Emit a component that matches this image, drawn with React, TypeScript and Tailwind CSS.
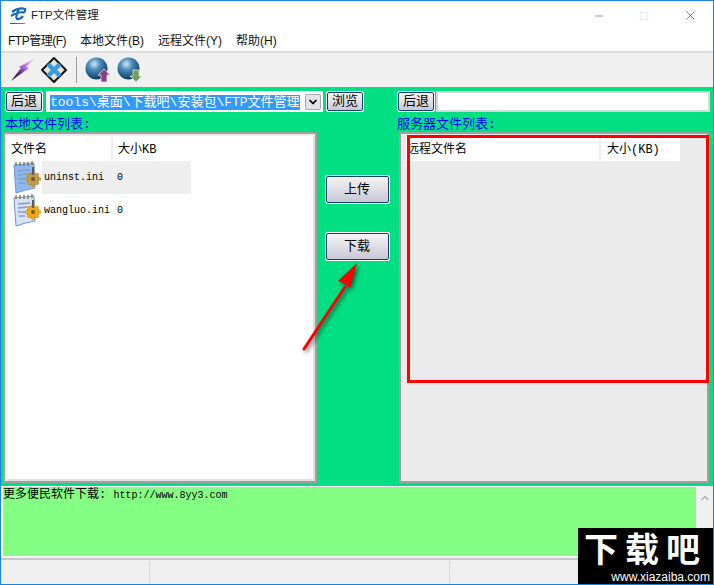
import { ChevronDown, ChevronUp, Minus, Square, X } from "lucide-react";

const uiFont = "font-['Liberation_Sans','Noto_Sans_CJK_SC',sans-serif]";
const monoFont = "font-['Liberation_Mono','Noto_Sans_CJK_SC',monospace]";

const menus = ["FTP管理(F)", "本地文件(B)", "远程文件(Y)", "帮助(H)"];

const SmallButton = ({ label }: { label: string }) => (
  <button className="h-[21px] w-[38px] shrink-0 rounded-[2px] border border-white bg-white p-0 outline-none">
    <span className={`flex h-full w-full items-center justify-center rounded-[2px] border border-[#123f6e] bg-gradient-to-b from-[#f6f6f6] to-[#c9c9d6] text-[13px] text-black ${monoFont}`}>
      {label}
    </span>
  </button>
);

const BigButton = ({ label }: { label: string }) => (
  <button className="h-[29px] w-[65px] shrink-0 rounded-[2px] border border-white bg-white p-0">
    <span className={`flex h-full w-full items-center justify-center rounded-[2px] border border-[#123f6e] bg-gradient-to-b from-[#f4f4f4] to-[#c8c8d6] text-[13px] text-black ${monoFont}`}>
      {label}
    </span>
  </button>
);

const BoltIcon = () => (
  <svg width="28" height="28" viewBox="0 0 28 28">
    <defs>
      <linearGradient id="bolt" x1="0" y1="1" x2="1" y2="0">
        <stop offset="0" stopColor="#111" />
        <stop offset="0.35" stopColor="#5a2a86" />
        <stop offset="0.6" stopColor="#b66be0" />
        <stop offset="1" stopColor="#f3eaf6" />
      </linearGradient>
    </defs>
    <path d="M2 25 L12 12 L10 11 L26 2 L17 11 L20 12 Z" fill="url(#bolt)" />
  </svg>
);

const DiamondIcon = () => (
  <svg width="28" height="28" viewBox="0 0 28 28">
    <path d="M14 2 L26 14 L14 26 L2 14 Z" fill="#e8e4d4" stroke="#111" strokeWidth="2" strokeLinejoin="round" />
    <path d="M8 8 L20 20 M20 8 L8 20" stroke="#3a9be0" strokeWidth="4.5" />
  </svg>
);

const GlobeIcon = ({ down }: { down?: boolean }) => (
  <svg width="26" height="26" viewBox="0 0 26 26">
    <defs>
      <radialGradient id={down ? "globeD" : "globeU"} cx="0.4" cy="0.3" r="0.75">
        <stop offset="0" stopColor="#d4e8f4" />
        <stop offset="0.35" stopColor="#4f8fbd" />
        <stop offset="0.8" stopColor="#174f7c" />
        <stop offset="1" stopColor="#0d2f4c" />
      </radialGradient>
    </defs>
    <circle cx="11.5" cy="11.5" r="11" fill={`url(#${down ? "globeD" : "globeU"})`} />
    {down ? (
      <path d="M16 13 H22 V19 H25 L19 25 L13 19 H16 Z" fill="#6f9d5c" stroke="#e8efe2" strokeWidth="0.8" />
    ) : (
      <path d="M19 12 L25 18 H22 V25 H16 V18 H13 Z" fill="#8b3f84" stroke="#eee0ec" strokeWidth="0.8" />
    )}
  </svg>
);

// notebook with a gear; the first row's gear is duller than the second's
const IniIcon = ({ tinted }: { tinted?: boolean }) => {
  const gear = tinted ? "#c49a48" : "#f0a818";
  return (
    <svg width="31" height="33" viewBox="0 0 31 33" className="shrink-0">
      <path d="M3 4 L23 2 L24 27 Q13 29 5 32 Z" fill={tinted ? "#8fb8ec" : "#d6e2f8"} stroke="#6f94d0" strokeWidth="1" />
      <path d="M7 10 L19 9 M7 14 L17 13 M7 18 L14 18 M8 22 L14 22" stroke="#7f9ccc" strokeWidth="1.4" />
      <path d="M5 1 V5 M9 1 V5 M13 1 V5 M17 1 V5 M21 0 V4" stroke="#6e6e50" strokeWidth="1.2" />
      <circle cx="22" cy="18" r="6" fill={gear} stroke="#8a6420" strokeWidth="0.8" />
      <path d="M22 10 V26 M14 18 H30 M16.5 12.5 L27.5 23.5 M27.5 12.5 L16.5 23.5" stroke={gear} strokeWidth="3" />
      <circle cx="22" cy="18" r="2" fill="#6a5630" />
      <path d="M22 6 V14" stroke="#5a5a5a" strokeWidth="2" />
    </svg>
  );
};

const LocalRow = ({ name, tinted }: { name: string; tinted?: boolean }) => (
  <div className="flex h-[33px] w-[180px] items-center">
    <IniIcon tinted={tinted} />
    <div className={`flex h-full flex-1 items-center pl-[2px] text-[10px] text-black ${monoFont} ${tinted ? "bg-[#eeeeee]" : ""}`}>
      <span className="w-[73px] shrink-0 whitespace-nowrap">{name}</span>
      <span>0</span>
    </div>
  </div>
);

export default function App() {
  return (
    <div className={`relative flex h-[585px] w-[714px] flex-col overflow-hidden border border-[#1883d7] bg-[#f0f0f0] ${uiFont}`}>
      {/* title bar */}
      <div className="flex h-[29px] shrink-0 items-center bg-white pl-[8px]">
        <svg width="18" height="18" viewBox="0 0 18 18">
          <path d="M3 5 Q10 0 16 2 Q17 4 14 6 M2 9 Q8 5 15 5 M10 2 Q6 9 8 12 Q11 13 14 9" fill="none" stroke="#1169b8" strokeWidth="2.2" />
          <path d="M1 16.5 H8" stroke="#1169b8" strokeWidth="1" />
          <path d="M8 16.5 H16" stroke="#e2531d" strokeWidth="1" />
        </svg>
        <span className="ml-[4px] text-[11.5px] text-[#222]">FTP文件管理</span>
        <div className="ml-auto flex h-full items-center text-[#333]">
          <div className="flex w-[45px] justify-center"><Minus size={12} strokeWidth={1} /></div>
          <div className="flex w-[46px] justify-center text-[#c8c8c8]"><Square size={10} strokeWidth={1} /></div>
          <div className="flex w-[46px] justify-center"><X size={15} strokeWidth={1} /></div>
        </div>
      </div>

      {/* menu */}
      <div className="flex h-[21px] shrink-0 items-center gap-[14px] bg-white pl-[7px] text-[12px] text-[#111]">
        {menus.map((m, i) => (
          <span key={m} className={i === 0 ? "tracking-[-0.5px]" : ""}>{m}</span>
        ))}
      </div>

      {/* toolbar */}
      <div className="flex h-[36px] shrink-0 items-center border-t-2 border-[#dcdcdc] bg-[#f0f0f0] pl-[8px]">
        <BoltIcon />
        <div className="ml-[3px]"><DiamondIcon /></div>
        <div className="mx-[8px] h-[26px] w-px bg-[#9a9a9a]" />
        <GlobeIcon />
        <div className="ml-[6px]"><GlobeIcon down /></div>
      </div>

      {/* main panes */}
      <div className="flex h-[399px] shrink-0 bg-[#00e082] pt-[4px]">
        <div className="flex w-[316px] shrink-0 flex-col pl-[2px]">
          <div className="flex h-[23px] items-start pl-[2px]">
            <SmallButton label="后退" />
            <div className="ml-[3px] flex h-[21px] w-[277px] shrink-0 items-center border-2 border-white bg-white">
              <div className="flex-1 overflow-hidden whitespace-nowrap pl-[2px] leading-[15px]">
                <span className={`bg-[#3399ff] text-[13px] leading-[15px] text-white ${monoFont}`}>tools\桌面\下载吧\安装包\FTP文件管理</span>
              </div>
              <div className="flex h-[16px] w-[16px] shrink-0 items-center justify-center rounded-[2px] border border-[#a8a8b4] bg-[#e4e4e8]">
                <ChevronDown size={12} strokeWidth={3.5} className="text-black" />
              </div>
            </div>
            <div className="ml-[3px] flex"><SmallButton label="浏览" /></div>
          </div>
          <div className={`h-[18px] pl-[2px] text-[13px] leading-[22px] text-[#0000ff] ${monoFont}`}>本地文件列表:</div>
          <div className="flex h-[351px] w-[314px] flex-col border-2 border-[#a0a0a0] bg-white shadow-[inset_2px_2px_0_#ececec,inset_-2px_-2px_0_#e0e0e0]">
            <div className="ml-[3px] mt-[3px] flex h-[24px] w-[184px] items-center text-[12px] text-black">
              <span className={`h-full w-[105px] border-r-2 border-[#eeeeee] pl-[3px] leading-[26px] ${monoFont}`}>文件名</span>
              <span className={`h-full pl-[5px] leading-[26px] ${monoFont}`}>大小KB</span>
            </div>
            <div className="ml-[6px] flex flex-col">
              <LocalRow name="uninst.ini" tinted />
              <LocalRow name="wangluo.ini" />
            </div>
          </div>
        </div>

        <div className="flex w-[80px] shrink-0 flex-col items-center pt-[84px]">
          <BigButton label="上传" />
          <div className="mt-[28px] flex"><BigButton label="下载" /></div>
        </div>

        <div className="flex w-[314px] shrink-0 flex-col">
          <div className="flex h-[23px] items-start">
            <SmallButton label="后退" />
            <div className="ml-[1px] h-[21px] w-[274px] border-2 border-[#d8d8d8] bg-white" />
          </div>
          <div className={`h-[18px] text-[13px] leading-[22px] text-[#0000ff] ${monoFont}`}>服务器文件列表:</div>
          <div className="ml-[2px] flex h-[351px] w-[310px] flex-col border-2 border-[#a0a0a0] bg-[#ebebeb]">
            <div className="ml-[5px] mt-[3px] flex h-[24px] w-[274px] items-center bg-white text-[12px] text-black">
              <span className={`h-full w-[195px] border-r-2 border-[#eeeeee] pl-[1px] leading-[26px] ${monoFont}`}>远程文件名</span>
              <span className={`h-full pl-[6px] leading-[26px] ${monoFont}`}>大小(KB)</span>
            </div>
          </div>
        </div>
      </div>

      {/* log box */}
      <div className="flex h-[72px] shrink-0">
        <div className={`h-[71px] flex-1 border-y border-l-2 border-white bg-[#84ff84] leading-[15px] text-black ${monoFont}`}>
          <span className="text-[12px]">更多便民软件下载: </span>
          <span className="text-[10px]">http://www.8yy3.com</span>
        </div>
        <div className="flex w-[17px] shrink-0 justify-center pt-[6px] text-[#b0b0b0]">
          <ChevronUp size={12} strokeWidth={3} />
        </div>
      </div>

      {/* status bar */}
      <div className="flex flex-1 border-t-2 border-[#c8c8c8] bg-[#efefef]">
        <div className="my-[1px] w-[149px] border-r border-[#d8d8d8]" />
        <div className="my-[1px] w-[300px] border-r border-[#d8d8d8]" />
      </div>

      {/* annotation overlays */}
      <div className="absolute left-[406px] top-[134px] h-[248px] w-[302px] border-[3px] border-[#ff0000]" />
      <svg className="absolute left-[296px] top-[258px] drop-shadow-[2px_2px_2px_rgba(0,0,0,0.55)]" width="70" height="100" viewBox="0 0 70 100">
        <path d="M7 90 L48 28" stroke="#ff0000" strokeWidth="3" strokeLinecap="round" />
        <path d="M60 4 L41 22 L48 25 L53 29 Z" fill="#ff0000" />
      </svg>

      {/* watermark */}
      <div className="absolute bottom-0 right-0 flex h-[56px] w-[135px] flex-col justify-between bg-black text-white">
        <span className="block pl-[6px] pt-[3px] text-[34px] font-bold leading-[34px] tracking-[7px] font-['Noto_Sans_CJK_SC',sans-serif]">下载吧</span>
        <span className="block h-[14px] pr-[3px] text-right text-[12px] leading-[14px] font-['Liberation_Sans',sans-serif]">www.xiazaiba.com</span>
      </div>
    </div>
  );
}
